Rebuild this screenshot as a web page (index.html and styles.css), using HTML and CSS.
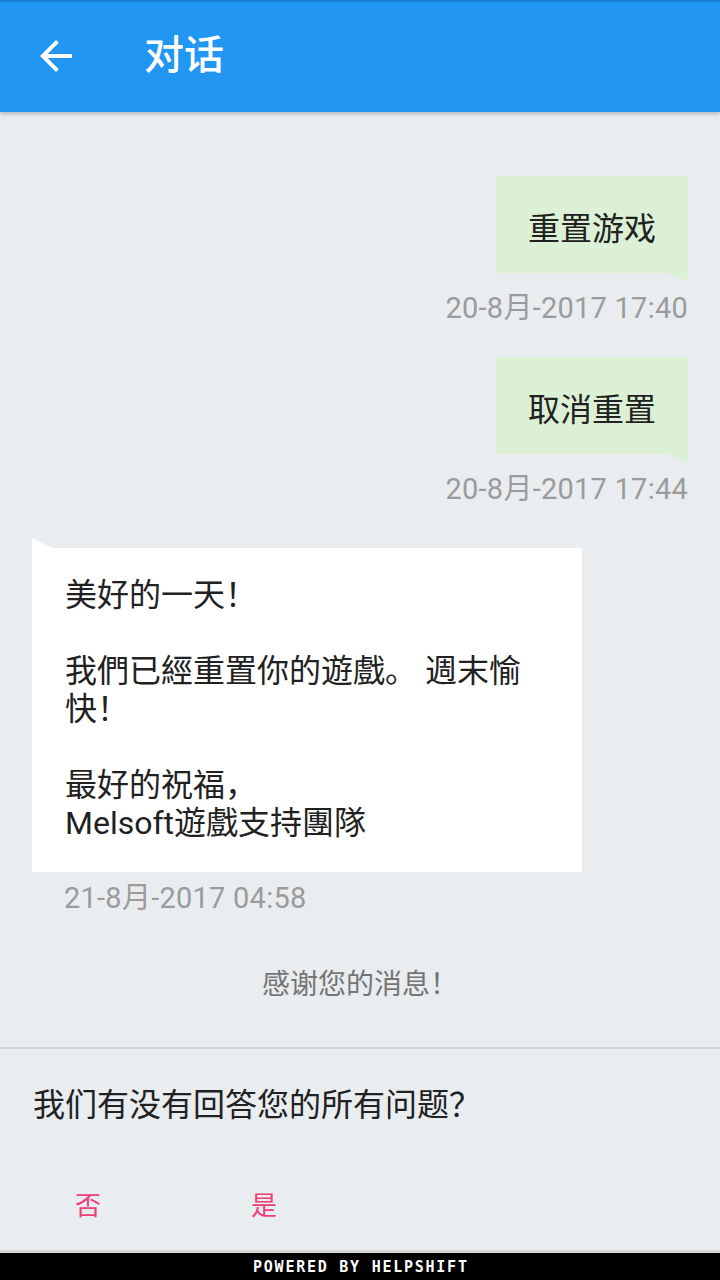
FILE: index.html
```html
<!DOCTYPE html>
<html lang="zh">
<head>
<meta charset="utf-8">
<title>对话</title>
<link rel="stylesheet" href="styles.css">
</head>
<body>
<div class="app">
  <header class="header">
    <svg class="back" viewBox="0 0 24 24" width="48" height="48" aria-hidden="true">
      <path d="M20 11H7.83l5.59-5.59L12 4l-8 8 8 8 1.41-1.41L7.83 13H20v-2z" fill="#fff"/>
    </svg>
    <h1 class="title">对话</h1>
  </header>

  <main class="messages">
    <div class="msg user">
      <div class="bubble">重置游戏</div>
      <div class="time">20-8月-2017 17:40</div>
    </div>
    <div class="msg user">
      <div class="bubble">取消重置</div>
      <div class="time">20-8月-2017 17:44</div>
    </div>
    <div class="msg agent">
      <div class="bubble">美好的一天！<br><br>我們已經重置你的遊戲。 週末愉快！<br><br>最好的祝福，<br>Melsoft遊戲支持團隊</div>
      <div class="time">21-8月-2017 04:58</div>
    </div>
    <div class="thanks">感谢您的消息！</div>
  </main>

  <footer class="footer">
    <div class="feedback">
      <div class="question">我们有没有回答您的所有问题？</div>
      <div class="actions">
        <button class="action">否</button>
        <button class="action">是</button>
      </div>
    </div>
    <div class="powered">POWERED BY HELPSHIFT</div>
  </footer>
</div>
</body>
</html>
```

FILE: styles.css
```css
html, body {
  margin: 0;
  padding: 0;
}

body {
  background: #e9edf0;
  font-family: Roboto, "Noto Sans CJK SC", sans-serif;
  color: #212121;
}

.app {
  width: 720px;
  height: 1280px;
  display: flex;
  flex-direction: column;
  overflow: hidden;
}

.header {
  height: 112px;
  box-sizing: border-box;
  border-top: 2px solid #1c7fd6;
  background: #2196f3;
  display: flex;
  align-items: center;
  padding-left: 32px;
  box-shadow: 0 2px 4px rgba(0, 0, 0, 0.22);
  position: relative;
  z-index: 1;
  flex-shrink: 0;
}

.back {
  display: block;
  margin-top: -2px;
}

.title {
  margin: -2px 0 0 64px;
  font-size: 40px;
  font-weight: 500;
  color: #fff;
  line-height: 48px;
}

.messages {
  display: flex;
  flex-direction: column;
  padding: 64px 32px 0;
}

.msg {
  display: flex;
  flex-direction: column;
  margin-top: 32px;
}

.msg:first-child {
  margin-top: 0;
}

.msg.user {
  align-items: flex-end;
}

.msg.agent {
  align-items: flex-start;
  padding-top: 10px;
}

.bubble {
  position: relative;
  font-size: 32px;
  line-height: 38px;
  color: #212121;
}

.user .bubble {
  background: #dcf0d6;
  padding: 34px 32px 25px;
}

.user .bubble::after {
  content: "";
  position: absolute;
  right: 0;
  top: 100%;
  width: 0;
  height: 0;
  border-top: 9px solid #dcf0d6;
  border-left: 20px solid transparent;
}

.agent .bubble {
  background: #fff;
  width: 550px;
  box-sizing: border-box;
  padding: 28px 33px 30px;
}

.agent .bubble::before {
  content: "";
  position: absolute;
  left: 0;
  bottom: 100%;
  width: 0;
  height: 0;
  border-bottom: 10px solid #fff;
  border-right: 20px solid transparent;
}

.time {
  font-size: 29px;
  letter-spacing: 0.25px;
  line-height: 34px;
  color: #9b9b9b;
  margin-top: 18px;
}

.agent .time {
  margin-top: 9px;
  padding-left: 32px;
}

.thanks {
  margin-top: 53px;
  text-align: center;
  font-size: 28px;
  line-height: 34px;
  color: #757575;
}

.footer {
  margin-top: auto;
  flex-shrink: 0;
}

.feedback {
  border-top: 2px solid #d0d4d7;
  padding: 36px 0 13px;
  border-bottom: 3px solid #d5d8db;
}

.question {
  padding-left: 33px;
  font-size: 32px;
  line-height: 40px;
  color: #212121;
}

.actions {
  display: flex;
  margin-top: 44px;
}

.action {
  width: 176px;
  height: 68px;
  border: 0;
  background: transparent;
  padding: 0;
  font-family: Roboto, "Noto Sans CJK SC", sans-serif;
  font-size: 26px;
  color: #ec407a;
}

.powered {
  height: 27px;
  background: #000;
  color: #fff;
  text-align: center;
  font-family: "DejaVu Sans Mono", monospace;
  font-weight: bold;
  font-size: 15px;
  line-height: 29px;
  letter-spacing: 1.75px;
  padding-left: 1.75px;
}
```
